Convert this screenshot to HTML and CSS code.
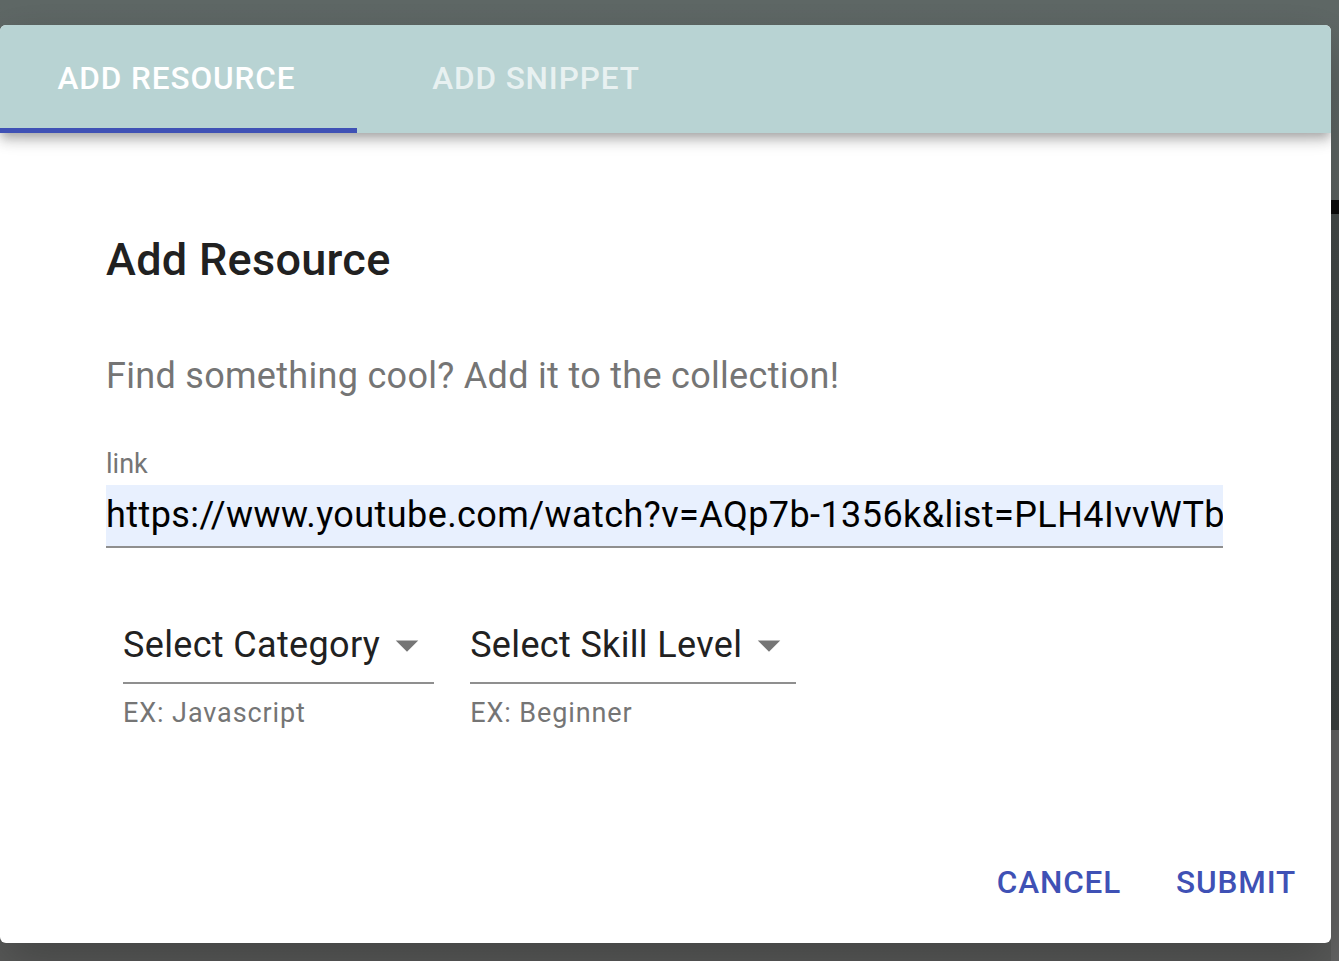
FILE: index.html
```html
<!DOCTYPE html>
<html lang="en">
<head>
    <meta charset="UTF-8">
    <meta name="viewport" content="width=device-width, initial-scale=1.0">
    <title>Add Resource</title>
    <link rel="stylesheet" href="styles.css">
</head>
<body>

    <!-- Dialog -->
    <div class="dialog">
        <div class="tabs">
            <div class="tab active">ADD RESOURCE</div>
            <div class="tab">ADD SNIPPET</div>
        </div>

        <div class="content">
            <h2 class="title">Add Resource</h2>
            <p class="subtitle">Find something cool? Add it to the collection!</p>

            <label class="field-label" for="link">link</label>
            <input class="link-input" type="text" id="link" value="https://www.youtube.com/watch?v=AQp7b-1356k&amp;list=PLH4IvvWTbz8pHsVZIjDh4FbXVtkC2oLDt">

            <div class="selects">
                <div class="form-control">
                    <div class="select">
                        <span class="select-value">Select Category</span>
                        <svg class="select-icon" viewBox="0 0 24 24"><path d="M7 10l5 5 5-5z"/></svg>
                    </div>
                    <div class="helper">EX: Javascript</div>
                </div>
                <div class="form-control">
                    <div class="select">
                        <span class="select-value">Select Skill Level</span>
                        <svg class="select-icon" viewBox="0 0 24 24"><path d="M7 10l5 5 5-5z"/></svg>
                    </div>
                    <div class="helper">EX: Beginner</div>
                </div>
            </div>
        </div>

        <div class="actions">
            <button type="button" class="btn">CANCEL</button>
            <button type="button" class="btn">SUBMIT</button>
        </div>
    </div>

</body>
</html>
```

FILE: styles.css
```css
:root {
    --tabbar: #b8d3d3;
    --indigo: #3f51b5;
    --text: #212121;
    --muted: #757575;
    --line: #8f8f8f;
}

* {
    margin: 0;
    padding: 0;
    box-sizing: border-box;
    font-family: 'Roboto', 'Liberation Sans', sans-serif;
}

body {
    min-height: 100vh;
    overflow: hidden;
    background:
        linear-gradient(to bottom, transparent 200px, #0b0b0b 200px, #0b0b0b 214px, #454b4a 214px, #3c4241 730px, #656565 730px) right top / 8px 100% no-repeat,
        linear-gradient(to bottom, #5f6866, #5a5b5a);
}

.dialog {
    width: 1331px;
    height: 918px;
    margin-top: 25px;
    background: #fff;
    border-radius: 6px;
    overflow: hidden;
    display: flex;
    flex-direction: column;
    box-shadow: 0 20px 50px rgba(0,0,0,0.25);
}

/* Tabs */
.tabs {
    display: flex;
    height: 108px;
    background: var(--tabbar);
    box-shadow: 0 4px 9px -2px rgba(0,0,0,0.2), 0 9px 11px 0 rgba(0,0,0,0.14), 0 2px 22px 0 rgba(0,0,0,0.12);
}

.tab {
    width: 357px;
    display: flex;
    align-items: center;
    justify-content: center;
    padding: 0 0 1px 1px;
    font-size: 31.5px;
    font-weight: 500;
    letter-spacing: 0.9px;
    color: rgba(255,255,255,0.7);
}

.tab.active {
    padding: 0 4px 1px 0;
    color: #fff;
    box-shadow: inset 0 -5px 0 var(--indigo);
}

/* Content */
.content {
    padding: 0 108px 0 106px;
}

.title {
    margin-top: 100px;
    font-size: 45px;
    font-weight: 500;
    line-height: 1.2;
    letter-spacing: 0.3px;
    color: var(--text);
}

.subtitle {
    margin-top: 68px;
    font-size: 36px;
    line-height: 1.2;
    color: var(--muted);
    letter-spacing: 0.3px;
}

.field-label {
    display: block;
    margin-top: 50px;
    font-size: 27px;
    line-height: 1.2;
    color: var(--muted);
}

.link-input {
    display: block;
    width: 100%;
    height: 63px;
    margin-top: 4px;
    padding: 0;
    border: none;
    border-bottom: 2px solid var(--line);
    background: #e8f0fe;
    font-size: 36px;
    line-height: 61px;
    letter-spacing: 0.42px;
    color: #000;
    outline: none;
}

.selects {
    display: flex;
    gap: 36px;
    margin-top: 62px;
    padding-left: 17px;
}

.select {
    display: flex;
    align-items: center;
    padding: 14px 0 16px;
    border-bottom: 2px solid var(--line);
}

.select-value {
    font-size: 36px;
    line-height: 42px;
    letter-spacing: 0.34px;
    color: var(--text);
}

.select-icon {
    width: 54px;
    height: 54px;
    margin: -6px 0 -6px 0;
    fill: rgba(0,0,0,0.54);
}

.helper {
    margin-top: 13px;
    font-size: 27px;
    line-height: 1.2;
    letter-spacing: 0.9px;
    color: var(--muted);
}

/* Actions */
.actions {
    margin-top: auto;
    display: flex;
    justify-content: flex-end;
    gap: 19px;
    padding: 0 17px 20px;
}

.btn {
    background: none;
    border: none;
    padding: 13px 18px;
    font-size: 31.5px;
    font-weight: 500;
    line-height: 1.75;
    letter-spacing: 0.85px;
    color: var(--indigo);
    cursor: pointer;
}
```
